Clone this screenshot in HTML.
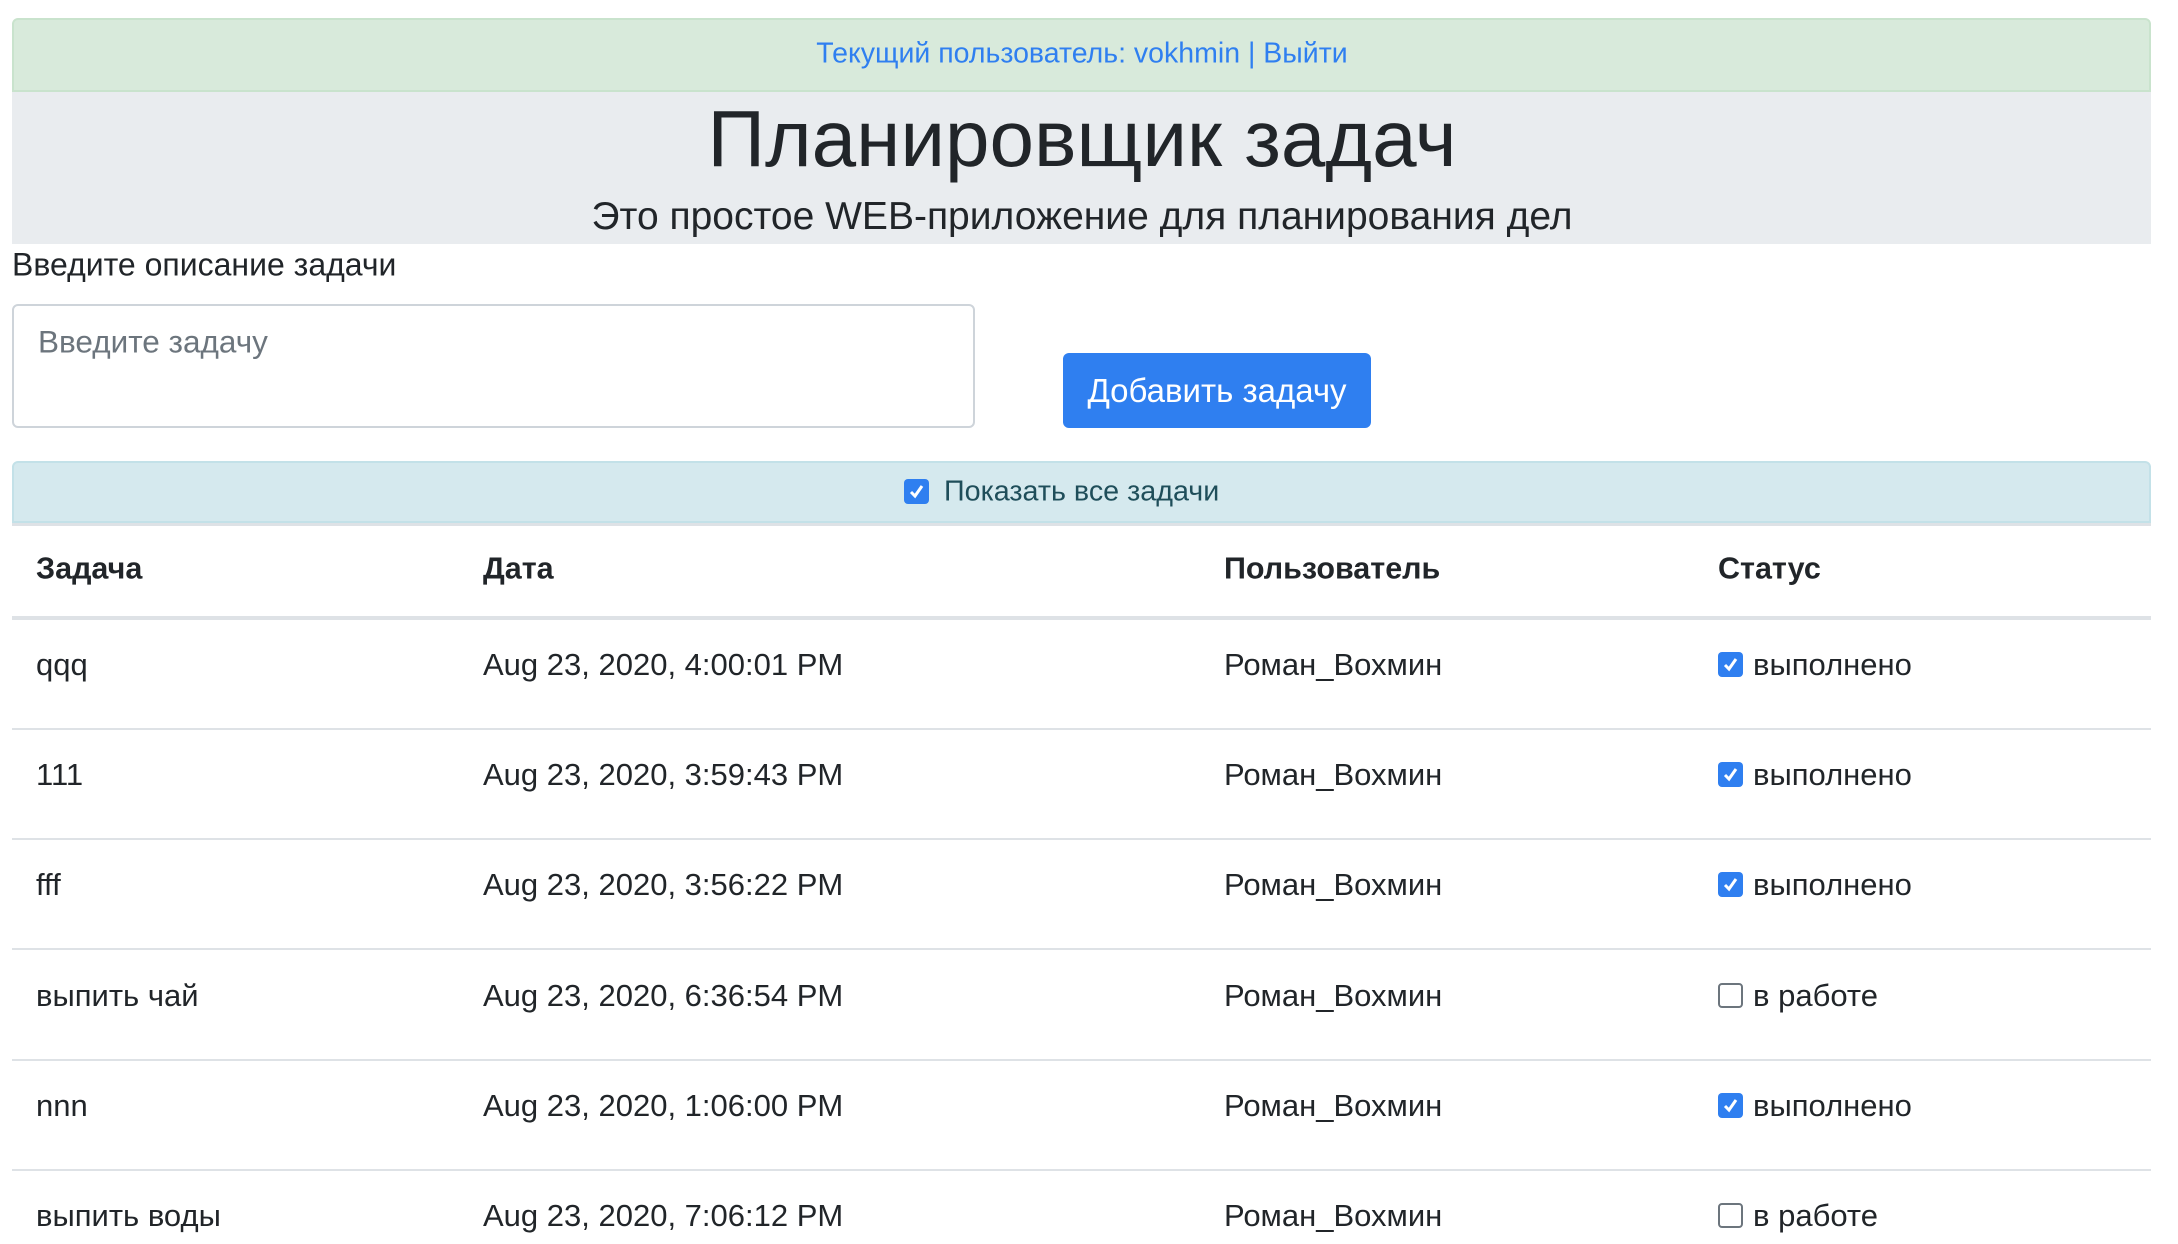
<!DOCTYPE html>
<html><head><meta charset="utf-8"><style>
*{box-sizing:border-box;margin:0;padding:0}
body{width:2178px;height:1244px;overflow:hidden;background:#fff;font-family:"Liberation Sans",sans-serif;color:#212529;position:relative}
.a{position:absolute;white-space:nowrap}
.c{transform:translateY(-50%)}
.green{left:12px;top:18px;width:2139px;height:74px;background:#d8eadb;border:2px solid #c9e3cd;border-radius:6px 6px 0 0}
.gray{left:12px;top:92px;width:2139px;height:152px;background:#e9ecef}
.cb{position:absolute;width:25px;height:25px;border-radius:4px;background:#2f7ff0}
.cb svg{position:absolute;left:3px;top:3px}
.cbe{position:absolute;width:25px;height:25px;border-radius:4px;border:2px solid #6c757d;background:#fff}
.line{position:absolute;left:12px;width:2139px;height:2px;background:#dee2e6}
.t{font-size:31px;transform:translateY(-50%)}
.h{font-size:30.5px;font-weight:bold;transform:translateY(-50%)}
</style></head><body>
<div class="a green"></div>
<div class="a c" style="left:0;width:2164px;top:54px;text-align:center;font-size:28.5px;color:#2f7ff0">Текущий пользователь: vokhmin | Выйти</div>
<div class="a gray"></div>
<div class="a c" style="left:0;width:2164px;top:139px;text-align:center;font-size:80px;font-weight:300;color:#212529">Планировщик задач</div>
<div class="a c" style="left:0;width:2164px;top:217px;text-align:center;font-size:39px;font-weight:300;color:#212529">Это простое WEB-приложение для планирования дел</div>
<div class="a c" style="left:12px;top:265px;font-size:32px">Введите описание задачи</div>
<div class="a" style="left:12px;top:304px;width:963px;height:124px;border:2px solid #ced4da;border-radius:6px;background:#fff"></div>
<div class="a c" style="left:38px;top:342px;font-size:31.5px;color:#6c757d">Введите задачу</div>
<div class="a" style="left:1063px;top:353px;width:308px;height:75px;background:#2f7ff0;border-radius:6px;color:#fff;font-size:33px;text-align:center;line-height:75px">Добавить задачу</div>
<div class="a" style="left:12px;top:461px;width:2139px;height:62px;background:#d5e9ee;border:2px solid #c3e1e8;border-radius:6px 6px 0 0"></div>
<div class="cb" style="left:904px;top:479px"><svg width="19" height="19" viewBox="0 0 19 19"><path d="M4 10 L8 14 L15 4" stroke="#fff" stroke-width="3" fill="none"/></svg></div>
<div class="a c" style="left:944px;top:492px;font-size:28.7px;color:#1f4e5a">Показать все задачи</div>
<div class="line" style="top:523px;height:3px"></div>
<div class="a h" style="left:36px;top:569px">Задача</div>
<div class="a h" style="left:483px;top:569px">Дата</div>
<div class="a h" style="left:1224px;top:569px">Пользователь</div>
<div class="a h" style="left:1718px;top:569px">Статус</div>
<div class="line" style="top:616px;height:4px"></div>

<div class="a t" style="left:36px;top:665px">qqq</div>
<div class="a t" style="left:483px;top:665px">Aug 23, 2020, 4:00:01 PM</div>
<div class="a t" style="left:1224px;top:665px">Роман_Вохмин</div>
<div class="cb" style="left:1718px;top:652px"><svg width="19" height="19" viewBox="0 0 19 19"><path d="M4 10 L8 14 L15 4" stroke="#fff" stroke-width="3" fill="none"/></svg></div>
<div class="a t" style="left:1753px;top:665px">выполнено</div>
<div class="line" style="top:728px"></div>

<div class="a t" style="left:36px;top:775px">111</div>
<div class="a t" style="left:483px;top:775px">Aug 23, 2020, 3:59:43 PM</div>
<div class="a t" style="left:1224px;top:775px">Роман_Вохмин</div>
<div class="cb" style="left:1718px;top:762px"><svg width="19" height="19" viewBox="0 0 19 19"><path d="M4 10 L8 14 L15 4" stroke="#fff" stroke-width="3" fill="none"/></svg></div>
<div class="a t" style="left:1753px;top:775px">выполнено</div>
<div class="line" style="top:838px"></div>

<div class="a t" style="left:36px;top:885px">fff</div>
<div class="a t" style="left:483px;top:885px">Aug 23, 2020, 3:56:22 PM</div>
<div class="a t" style="left:1224px;top:885px">Роман_Вохмин</div>
<div class="cb" style="left:1718px;top:872px"><svg width="19" height="19" viewBox="0 0 19 19"><path d="M4 10 L8 14 L15 4" stroke="#fff" stroke-width="3" fill="none"/></svg></div>
<div class="a t" style="left:1753px;top:885px">выполнено</div>
<div class="line" style="top:948px"></div>

<div class="a t" style="left:36px;top:996px">выпить чай</div>
<div class="a t" style="left:483px;top:996px">Aug 23, 2020, 6:36:54 PM</div>
<div class="a t" style="left:1224px;top:996px">Роман_Вохмин</div>
<div class="cbe" style="left:1718px;top:983px"></div>
<div class="a t" style="left:1753px;top:996px">в работе</div>
<div class="line" style="top:1059px"></div>

<div class="a t" style="left:36px;top:1106px">nnn</div>
<div class="a t" style="left:483px;top:1106px">Aug 23, 2020, 1:06:00 PM</div>
<div class="a t" style="left:1224px;top:1106px">Роман_Вохмин</div>
<div class="cb" style="left:1718px;top:1093px"><svg width="19" height="19" viewBox="0 0 19 19"><path d="M4 10 L8 14 L15 4" stroke="#fff" stroke-width="3" fill="none"/></svg></div>
<div class="a t" style="left:1753px;top:1106px">выполнено</div>
<div class="line" style="top:1169px"></div>

<div class="a t" style="left:36px;top:1216px">выпить воды</div>
<div class="a t" style="left:483px;top:1216px">Aug 23, 2020, 7:06:12 PM</div>
<div class="a t" style="left:1224px;top:1216px">Роман_Вохмин</div>
<div class="cbe" style="left:1718px;top:1203px"></div>
<div class="a t" style="left:1753px;top:1216px">в работе</div>
</body></html>
